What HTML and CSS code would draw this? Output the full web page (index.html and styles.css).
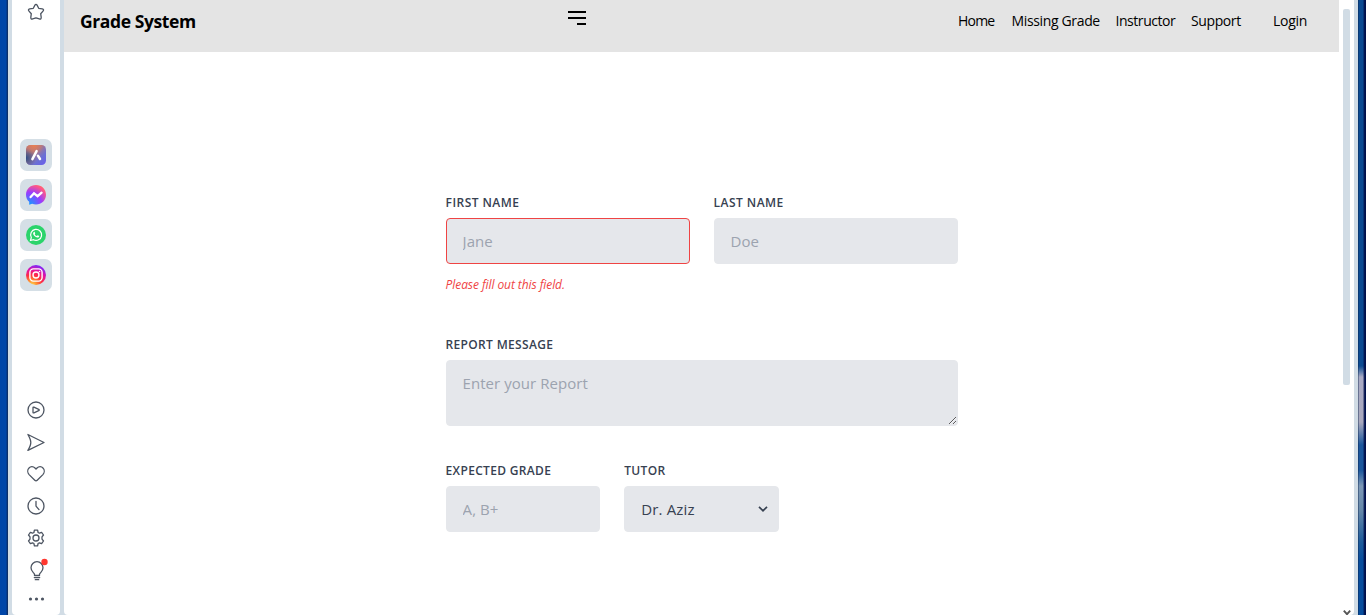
FILE: index.html
```html
<!DOCTYPE html>
<html lang="en">
<head>
<meta charset="utf-8">
<title>Grade System</title>
<link rel="stylesheet" href="styles.css">
</head>
<body>
<div class="desktop">
  <div class="window">
    <aside class="sidebar">
      <svg class="star" width="18" height="18" viewBox="0 0 18 18"><path class="line" d="M9 1.4Q9.7 1.4 10.2 2.4L11.7 5.3 15.3 5.9Q17.4 6.5 16 8.1L13.7 10.7 14.2 14.4Q14.3 16.6 12.3 15.9L9 14.9 5.7 15.9Q3.7 16.6 3.8 14.4L4.3 10.7 2 8.1Q.6 6.5 2.7 5.9L6.3 5.3 7.8 2.4Q8.3 1.4 9 1.4Z"/></svg>
      <div class="apps">
        <span class="app"><svg width="20" height="20" viewBox="0 0 20 20">
          <defs><linearGradient id="aria" x1="0" y1="0" x2="1" y2="1"><stop offset="0" stop-color="#b87476"/><stop offset=".4" stop-color="#a8788c"/><stop offset=".7" stop-color="#6a70d4"/><stop offset="1" stop-color="#6c5bf0"/></linearGradient>
          <radialGradient id="ariaDark" cx="0" cy=".65" r=".5"><stop offset="0" stop-color="#2d4d86"/><stop offset="1" stop-color="#2d4d86" stop-opacity="0"/></radialGradient>
          <radialGradient id="ariaWarm" cx=".4" cy="0" r=".5"><stop offset="0" stop-color="#ea8050"/><stop offset="1" stop-color="#ea8050" stop-opacity="0"/></radialGradient></defs>
          <rect width="20" height="20" rx="4.5" fill="url(#aria)"/><rect width="20" height="20" rx="4.5" fill="url(#ariaDark)"/><rect width="20" height="20" rx="4.5" fill="url(#ariaWarm)"/>
          <path d="M10.6 6.1 6.4 14.1M11.9 10.7 14 14" fill="none" stroke="#fff" stroke-width="2.5" stroke-linecap="round"/></svg></span>
        <span class="app"><svg width="20" height="20" viewBox="0 0 20 20">
          <defs><radialGradient id="msg" cx=".18" cy=".98" r="1.1"><stop offset="0" stop-color="#139aff"/><stop offset=".55" stop-color="#9a3cff"/><stop offset=".9" stop-color="#ff5686"/><stop offset="1" stop-color="#ff6968"/></radialGradient></defs>
          <path d="M10 0C4.3 0 0 4.200 0 9.700c0 2.900 1.200 5.300 3.200 7.100v3l2.900-1.100c1.200.4 2.500.7 3.900.7 5.700 0 10-4.200 10-9.700S15.700 0 10 0z" fill="url(#msg)"/>
          <path d="M4.600 12.100 8 8.300l3.600 2.900L15.600 7.700" fill="none" stroke="#fff" stroke-width="2.300" stroke-linejoin="miter" stroke-linecap="round"/></svg></span>
        <span class="app"><svg width="20" height="20" viewBox="0 0 20 20"><circle cx="10" cy="10" r="10" fill="#2bd46b"/>
          <path d="m4.500 15.500.8-3a5.500 5.500 0 1 1 2.200 2.200z" fill="none" stroke="#fff" stroke-width="1.200"/>
          <path d="M7.700 7.200c.6-.7 1-.4 1.200.2l.4.900-.6.900c.6 1 1.200 1.500 2.200 1.900l.8-.8 1.500.8c.1 1-.8 1.600-1.700 1.500-2.300-.3-4.400-2.500-4.400-4.100 0-.5.200-.9.600-1.300z" fill="#fff"/></svg></span>
        <span class="app"><svg width="20" height="20" viewBox="0 0 20 20">
          <defs><radialGradient id="insta" cx=".3" cy="1" r="1"><stop offset="0" stop-color="#ffd44d"/><stop offset=".25" stop-color="#ff8b30"/><stop offset=".5" stop-color="#ff303f"/><stop offset=".76" stop-color="#e511a0"/><stop offset="1" stop-color="#8227f5"/></radialGradient></defs>
          <circle cx="10" cy="10" r="10" fill="url(#insta)"/><rect x="3.900" y="3.900" width="12.200" height="12.200" rx="3.500" fill="none" stroke="#fff" stroke-width="1.400"/><circle cx="10" cy="10" r="3" fill="none" stroke="#fff" stroke-width="1.400"/><circle cx="13.500" cy="6.500" r=".8" fill="#fff"/></svg></span>
      </div>
      <nav class="tools">
        <svg width="20" height="32" viewBox="0 0 20 32"><circle class="line" cx="10" cy="16" r="8"/><path class="line" d="M7 13.700v4.600q0 .9.900.5l4.800-2.100q1.100-.7 0-1.300L7.900 13.200q-.9-.4-.9.500z"/></svg>
        <svg width="20" height="32" viewBox="0 0 20 32"><path class="line" d="M1.900 8.500 18 16.500 1.900 24.400Q4.800 19.500 4.800 16.500T1.900 8.500z"/></svg>
        <svg width="20" height="32" viewBox="0 0 20 32"><path class="line" d="m10 11.100-1-1.100C7.200 8.200 4.500 8.300 3 10c-1.800 1.900-1.500 4.800.1 6.600l5.700 5.700q1.200 1.200 2.400 0l5.700-5.700c1.600-1.800 1.900-4.700.1-6.600-1.500-1.700-4.200-1.800-6 0z"/></svg>
        <svg width="20" height="32" viewBox="0 0 20 32"><circle class="line" cx="10" cy="16" r="8"/><path class="line" d="M10 11.300v4.800l3 3.500"/></svg>
        <svg width="20" height="32" viewBox="0 0 20 32"><path class="line" d="M8.400 8.200h3.200l.5 2.300 1.300.7 2.200-.9 1.900 2.700-1.500 1.900v2.200l1.500 1.900-1.900 2.700-2.200-.9-1.300.7-.5 2.300H8.400l-.5-2.300-1.300-.7-2.200.9L2.500 19 4 17.100v-2.200L2.500 13l1.900-2.700 2.200.9 1.300-.7z"/><circle class="line" cx="10" cy="16" r="3"/></svg>
        <svg width="20" height="32" viewBox="0 0 20 32"><path class="line" d="M8.500 21.500v-1.200c-.5-1.600-3.500-2.900-3.500-6.600a6 6 0 0 1 12 0c0 3.700-3 5-3.500 6.600v1.200zM8.300 23.600h5.400M9.300 25.700h3.400"/><circle cx="18.500" cy="8" r="3.200" fill="#ff372f"/></svg>
        <svg width="20" height="26" viewBox="0 0 20 26"><g fill="#4d5562"><circle cx="4.500" cy="13" r="1.600"/><circle cx="10.500" cy="13" r="1.600"/><circle cx="16.500" cy="13" r="1.600"/></g></svg>
      </nav>
    </aside>
    <main class="page">
      <header class="topbar">
        <h1 class="brand">Grade System</h1>
        <svg class="menu" width="18" height="14" viewBox="0 0 18 14"><path d="M0 1h18M0 7h18M9 13h9" stroke="#000" stroke-width="2"/></svg>
        <nav class="links"><a class="home">Home</a><a class="missing">Missing Grade</a><a class="instructor">Instructor</a><a class="support">Support</a><a class="login">Login</a></nav>
      </header>
      <form class="form">
        <div class="row two">
          <div><label class="label" for="first">First Name</label><input class="field invalid" id="first" placeholder="Jane"><p class="error">Please fill out this field.</p></div>
          <div><label class="label" for="last">Last Name</label><input class="field" id="last" placeholder="Doe"></div>
        </div>
        <div class="row">
          <div><label class="label long" for="report">Report Message</label><textarea class="field area" id="report" placeholder="Enter your Report"></textarea></div>
        </div>
        <div class="row three">
          <div><label class="label long" for="grade">Expected Grade</label><input class="field" id="grade" placeholder="A, B+"></div>
          <div><label class="label long" for="tutor">Tutor</label>
            <div class="select"><select class="field choice" id="tutor"><option>Dr. Aziz</option></select>
            <svg class="chevron" width="10" height="6" viewBox="0 0 10 6"><path d="m1 .8 4 4 4-4" fill="none" stroke="#374151" stroke-width="1.700"/></svg></div></div>
        </div>
      </form>
    </main>
    <div class="scroll"><span class="thumb"></span><svg class="down" width="8" height="5" viewBox="0 0 8 5"><path d="m.8 .7 3.200 3.500L7.200.7" fill="none" stroke="#555" stroke-width="1.900"/></svg></div>
  </div>
</div>
</body>
</html>
```
FILE: styles.css
```css
* { box-sizing: border-box; }
body { margin: 0; overflow: hidden; font-family: "Open Sans", "Noto Sans", sans-serif; }
.desktop {
  height: 615px;
  padding: 0 8px;
  background:
    linear-gradient(90deg, #0046a8 0, #0046a8 6px, #07337a 7px, #132d5c 8px) left / 8px 100% no-repeat,
    linear-gradient(90deg, rgba(6, 31, 74, .8) 0, rgba(6, 31, 74, 0) 1px, rgba(0, 16, 75, 0) 5px, rgba(0, 16, 75, .75) 6px, #00104b 7px) right / 8px 100% no-repeat,
    linear-gradient(#0b4a91 0, #0b4a91 366px, #a9aac4 377px, #aaa9bd 422px, #1a569c 445px, #1a569c 470px, #7d98b6 486px, #6688a9 510px, #1d5b9b 542px, #074d9d 560px) right / 8px 100% no-repeat;
}
.window { display: flex; height: 100%; background: #d1dce5; padding: 0 4px; }
.sidebar {
  width: 48px;
  margin-right: 4px;
  background: #fff;
  display: flex;
  flex-direction: column;
  align-items: center;
  border-radius: 0 0 4px 4px;
}
.star { margin-top: 3px; }
.line, .tools path { fill: none; stroke: #4d5562; stroke-width: 1.3; stroke-linejoin: round; stroke-linecap: round; }
.apps { display: grid; gap: 8px; margin-top: 118px; }
.app { width: 32px; height: 32px; border-radius: 7px; background: #d5dfe6; display: grid; place-items: center; }
.tools { margin-top: 102.500px; display: flex; flex-direction: column; margin-right: 1px; }
.tools svg { display: block; overflow: visible; }
.page { width: 1275px; background: #fff; border-bottom-left-radius: 4px; }
.topbar { height: 52px; background: #e4e4e4; padding: 0 32px 11px 16px; display: flex; align-items: center; }
.brand { margin: 0; width: 488px; font-size: 17.500px; line-height: 28px; font-weight: 700; letter-spacing: -.4px; white-space: nowrap; }
.menu { margin-top: -5px; }
.links { margin-left: auto; display: flex; gap: 16px; font-size: 14px; line-height: 20px; color: #000; white-space: nowrap; }
.home { width: 37.500px; letter-spacing: -.8px; }
.missing { width: 88px; letter-spacing: -.35px; }
.instructor { width: 59.500px; letter-spacing: -.45px; }
.support { width: 50px; letter-spacing: -.4px; }
.login { margin-left: 16px; width: 34px; letter-spacing: -.3px; }
.form { width: 512px; margin: 143px 0 0 381.600px; }
.row { display: grid; grid-template-columns: 1fr; column-gap: 24px; }
.two { grid-template-columns: 1fr 1fr; margin-bottom: 44px; }
.three { grid-template-columns: repeat(3, 1fr); margin-top: 37px; }
.label { display: block; margin-bottom: 7px; font-size: 12px; line-height: 16px; font-weight: 600; letter-spacing: .45px; color: #374151; text-transform: uppercase; white-space: nowrap; }
.long { letter-spacing: .33px; }
.field {
  display: block;
  width: 100%;
  height: 46px;
  margin: 0;
  padding: 12px 16px;
  border: 1px solid #e5e7eb;
  border-radius: 4px;
  background: #e5e7eb;
  color: #374151;
  font: 15px/20px "Open Sans", "Noto Sans", sans-serif;
  letter-spacing: .05px;
  outline: 0;
}
.field::placeholder { color: #9ca3af; opacity: 1; }
.invalid { border-color: #ef4444; }
.area { height: 66px; }
.error { margin: 13px 0 0; font-size: 12px; line-height: 16px; font-style: italic; letter-spacing: -.08px; color: #ef4444; }
.select { position: relative; }
.choice { appearance: none; letter-spacing: .15px; }
.chevron { position: absolute; right: 11px; top: 20px; }
.scroll { width: 15px; background: #fff; display: flex; flex-direction: column; align-items: center; justify-content: space-between; padding-top: 9px; border-bottom-right-radius: 4px; }
.thumb { width: 7px; height: 376px; background: #d1dce5; border-radius: 2px; }
```
